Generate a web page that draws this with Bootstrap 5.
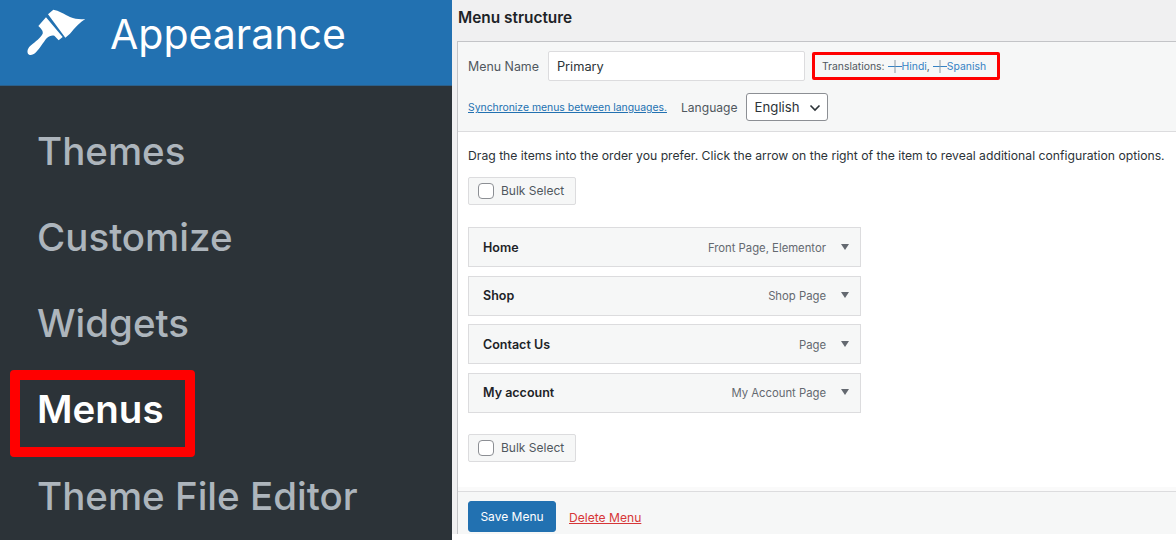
<!DOCTYPE html>
<html lang="en">
<head>
<meta charset="utf-8">
<title>Menu structure</title>
<link rel="stylesheet" href="https://cdn.jsdelivr.net/npm/bootstrap@5.3.0/dist/css/bootstrap.min.css">
<style>
html,body{height:540px;overflow:hidden;background:#fff}
body{font-family:Inter,"Liberation Sans",sans-serif;color:#1d2327}
.shot{width:1176px;height:540px}
.side{width:452px;height:540px;background:#2c3338;flex:none}
.side-head{height:86px;background:#2271b1;border-bottom:1px solid #2b5f8a;color:#fff;font-size:41px;padding-left:20px;padding-bottom:16px;gap:20px}
.side-head svg{width:70px;height:55px;flex:none;margin-top:-4px}
.side-list{padding:22px 0 0 0;margin:0;list-style:none}
.side-item{height:86.2px;padding-left:37px;font-size:38.5px;color:#adb5bc;font-weight:500;display:flex;align-items:center;line-height:1}
.side-now{color:#fff;font-weight:600;position:relative}
.side-now::after{content:"";position:absolute;left:10px;top:3px;width:185px;height:87px;border:10px solid #f00;border-radius:4px}
.main{width:724px;height:534px;background:#f0f0f1;flex:none;overflow:hidden}
.main-title{height:41px;margin:0;padding:11px 0 0 6px;font-size:15.4px;line-height:14px;font-weight:600;color:#1d2327}
.panel{margin-left:5px;border:1px solid #c3c4c7;border-right:0;border-bottom:0;height:493px;display:flex;flex-direction:column}
.panel-top{height:90px;background:#f6f7f7;border-bottom:1px solid #dcdcde;padding:9px 10px 0;font-size:12.4px;color:#50575e;flex:none}
.name-label{padding-top:2px}
.name-input{width:257px;height:30px;margin:0 7px 0 9px;background:#fff;border:1px solid #dcdcde;border-radius:2px;font-size:12.8px;padding:0 8px;color:#2c3338;line-height:30px}
.trans{width:188px;height:28px;border:3px solid #f00;border-radius:2px;padding:2px 0 0 7px;font-size:10.4px;color:#50575e;white-space:nowrap}
.trans a{color:#3582c4;text-decoration:none}
.plus{width:14px;height:13px;margin:0 0 0 3px;vertical-align:-3px}
.row-two{margin-top:12px}
.sync{font-size:10.4px;color:#2271b1;text-decoration:underline;margin-right:14px;padding-top:2px}
.lang-label{font-size:12.1px;padding-top:2px}
.lang-box{height:28px;width:82px;margin-left:8px;background:#fff;border:1px solid #8c8f94;border-radius:3px;padding:2px 6px 0 8px;font-size:13.2px;color:#2c3338}
.panel-body{background:#fff;flex:1;padding:16px 10px 0;border-bottom:4px solid #fafafa}
.hint{font-size:12.2px;line-height:16px;margin:0 0 13px;color:#2c3338;white-space:nowrap}
.bulk{width:108px;height:28px;background:#f6f7f7;border:1px solid #dcdcde;border-radius:2px;padding-left:9px;font-size:12px;color:#50575e;gap:7px}
.tick{width:16px;height:16px;background:#fff;border:1px solid #8c8f94;border-radius:4px;flex:none}
.items{margin:22px 0 0;padding:0;list-style:none;width:393px;display:flex;flex-direction:column;gap:8.6px}
.item{height:40px;background:#f6f7f7;border:1px solid #dcdcde;padding:2px 11px 0 14px;font-size:12.5px}
.item b{font-weight:600;color:#1d2327}
.item span{margin-left:auto;font-size:11.3px;color:#646970}
.caret{width:0;height:0;border-left:4px solid transparent;border-right:4px solid transparent;border-top:6px solid #646970;margin:0 0 3px 15px}
.bulk-end{margin-top:21px}
.panel-foot{height:43px;background:#f6f7f7;border-top:1px solid #dcdcde;padding:9px 10px 0;flex:none;gap:13px}
.save{background:#2271b1;color:#fff;border:1px solid #2271b1;border-radius:3px;height:31px;width:88px;font-size:12px;padding:0;line-height:29px;--bs-btn-hover-bg:#2271b1}
.del{color:#d63638;font-size:12.1px;text-decoration:underline}
</style>
</head>
<body>
<div class="shot d-flex">
  <aside class="side">
    <div class="side-head d-flex align-items-center">
      <svg viewBox="0 0 210 165" aria-hidden="true"><path fill="#fff" d="M84 28 L100 14 C115 16 135 28 150 36 C165 42 180 44 196 42 C180 52 165 68 150 86 L136 98 Z"/><path fill="#fff" d="M78 37 L128 96 L116 106 L103 92 C96 90 88 92 80 100 C70 112 58 132 48 142 C38 152 28 152 24 146 C20 138 24 128 34 120 C46 110 62 98 68 86 C70 78 64 72 55 63 Z"/></svg>
      <span>Appearance</span>
    </div>
    <ul class="side-list">
      <li class="side-item">Themes</li>
      <li class="side-item">Customize</li>
      <li class="side-item">Widgets</li>
      <li class="side-item side-now">Menus</li>
      <li class="side-item">Theme File Editor</li>
    </ul>
  </aside>
  <main class="main">
    <h2 class="main-title">Menu structure</h2>
    <section class="panel">
      <div class="panel-top">
        <div class="d-flex align-items-center">
          <span class="name-label">Menu Name</span>
          <div class="name-input">Primary</div>
          <div class="trans d-flex align-items-center">Translations:<a href="#"><svg class="plus" viewBox="0 0 14 13"><path d="M0 6.5H14" stroke="#3582c4"/><path d="M7 0V13" stroke="#8c9aa5"/></svg>Hindi</a>,<a href="#"><svg class="plus" viewBox="0 0 14 13"><path d="M0 6.5H14" stroke="#3582c4"/><path d="M7 0V13" stroke="#8c9aa5"/></svg>Spanish</a></div>
        </div>
        <div class="row-two d-flex align-items-center">
          <a href="#" class="sync">Synchronize menus between languages.</a>
          <span class="lang-label">Language</span>
          <div class="lang-box d-flex align-items-center justify-content-between">English<svg width="12" height="8" viewBox="0 0 12 8"><path d="M1.5 1.5 6 6l4.5-4.5" fill="none" stroke="#2c3338" stroke-width="1.6"/></svg></div>
        </div>
      </div>
      <div class="panel-body">
        <p class="hint">Drag the items into the order you prefer. Click the arrow on the right of the item to reveal additional configuration options.</p>
        <div class="bulk d-flex align-items-center"><i class="tick"></i>Bulk Select</div>
        <ul class="items">
          <li class="item d-flex align-items-center"><b>Home</b><span>Front Page, Elementor</span><i class="caret"></i></li>
          <li class="item d-flex align-items-center"><b>Shop</b><span>Shop Page</span><i class="caret"></i></li>
          <li class="item d-flex align-items-center"><b>Contact Us</b><span>Page</span><i class="caret"></i></li>
          <li class="item d-flex align-items-center"><b>My account</b><span>My Account Page</span><i class="caret"></i></li>
        </ul>
        <div class="bulk bulk-end d-flex align-items-center"><i class="tick"></i>Bulk Select</div>
      </div>
      <div class="panel-foot d-flex align-items-start">
        <button class="btn save" type="button">Save Menu</button>
        <a href="#" class="del mt-2">Delete Menu</a>
      </div>
    </section>
  </main>
</div>
<script src="https://cdn.jsdelivr.net/npm/bootstrap@5.3.0/dist/js/bootstrap.bundle.min.js"></script>
</body>
</html>
